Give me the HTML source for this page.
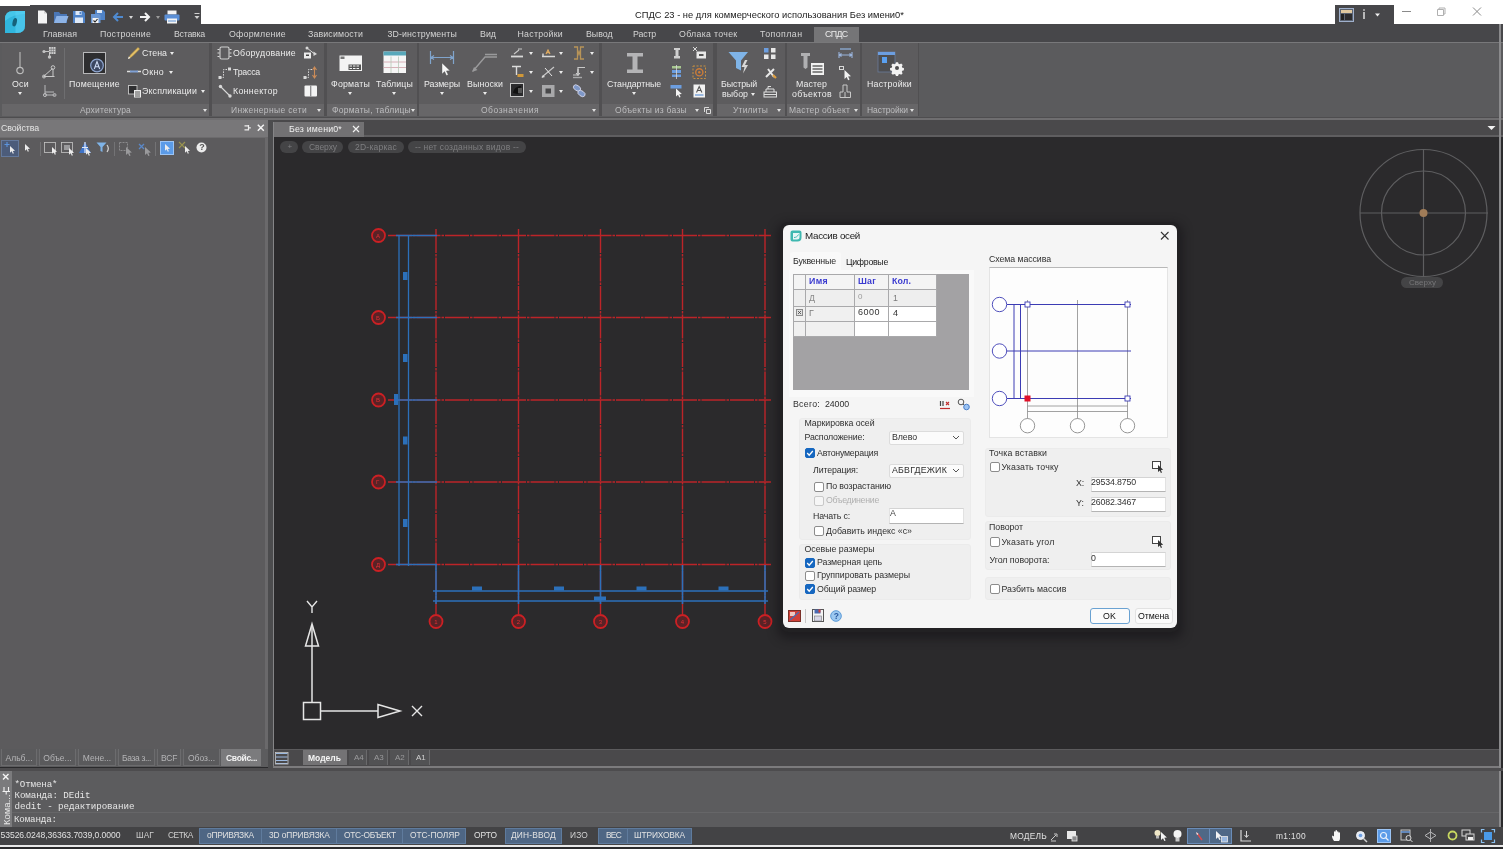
<!DOCTYPE html>
<html lang="ru">
<head>
<meta charset="utf-8">
<title>СПДС 23</title>
<style>
*{box-sizing:border-box;margin:0;padding:0}
html,body{width:1503px;height:849px;overflow:hidden;background:#2a2a2c}
body{position:relative;font-family:"Liberation Sans",sans-serif;font-size:8.5px;color:#d8d8d8}
#root{position:absolute;left:0;top:0;width:1503px;height:849px;will-change:transform}
.a{position:absolute}
.t{position:absolute;white-space:nowrap;line-height:1;transform-origin:0 50%}
svg{position:absolute;overflow:visible}
#titlebar{left:0;top:0;width:1503px;height:25px;background:#fff}
#qat{left:0;top:6px;width:201px;height:19px;background:#47474a}
#qat2{left:30px;top:5px;width:171px;height:3px;background:#47474a}
#wtab{left:1335px;top:5px;width:59px;height:20px;background:#47474a}
#tabrow{left:0;top:24px;width:1503px;height:18px;background:#47474a}
#spds{left:814px;top:27px;width:45px;height:15px;background:#757577}
#ribbon{left:0;top:42px;width:1503px;height:75px;background:#5b5b5d;border-top:1px solid #78787a}
.panel{position:absolute;top:43px;height:73px;background:#5d5c5e}
.plabel{position:absolute;left:0;right:0;bottom:0;height:12px;background:#676668}
.dd{position:absolute;width:0;height:0;border-left:2.5px solid transparent;border-right:2.5px solid transparent;border-top:3px solid #ececec}
#underribbon{left:0;top:117px;width:1503px;height:20px;background:#4a494b;border-top:1px solid #4e4d4f;border-bottom:2px solid #5f5e60}
#underline2{left:0;top:118px;width:1503px;height:2px;background:#6f6e70}
/* left palette */
#prophead{left:0;top:119px;width:268px;height:18px;background:#787779}
#propbody{left:0;top:137px;width:268px;height:612px;background:#5c5b5d;border-right:3px solid #6a696b;border-top:1px solid #6c6b6d}
#splitter{left:268px;top:120px;width:6px;height:646px;background:#4c4c4e}
#doctab{left:274px;top:122px;width:90px;height:15px;background:#727173}
#canvas{left:274px;top:137px;width:1225px;height:612px;background:#2b2a2c}
#canvasL{left:272.500px;top:122px;width:1.500px;height:645px;background:#858587}
#rightedge{left:1499px;top:24px;width:2px;height:821px;background:#8a8a8c}
#proptabs{left:0;top:749px;width:268px;height:18px;background:#5c5c5e}
.ptab{position:absolute;top:749px;height:17px;border:1px solid #6c6c6e;border-top:none;background:#5a5a5c}
#modeltabs{left:274px;top:749px;width:1225px;height:18px;background:#4a494b;border-top:1px solid #5c5b5d}
.mtab{position:absolute;top:750px;height:14.500px;background:#525254;border-right:1px solid #6a6a6c}
#cmdgap{left:0;top:767px;width:1503px;height:4px;background:#4d4c4e}
#cmd{left:0;top:770px;width:1499px;height:57px;background:#5c5c5e}
#cmdside{left:0;top:770px;width:12px;height:57px;background:#7b7b7d}
#cmdline{left:12px;top:812px;width:1487px;height:1px;background:#666668}
.mono{font-family:"Liberation Mono",monospace;font-size:9.2px;color:#e4e4e4}
#status{left:0;top:826.500px;width:1503px;height:18px;background:#434345}
.sb{position:absolute;top:827.500px;height:16px;background:#4e6684;border:1px solid #5f7b9d}
.st{position:absolute;white-space:nowrap;line-height:1;top:831px;font-size:8.5px;color:#dedede;transform-origin:0 50%}
#whiteline{left:0;top:844px;width:1503px;height:2px;background:#e8e8e8}
#bottomdark{left:0;top:846px;width:1503px;height:3px;background:#2a2a2c}
/* dialog */
#dlgshadow{left:781px;top:224px;width:398px;height:408px;border-radius:8px;background:#222123;box-shadow:0 4px 10px 3px rgba(20,19,21,.55)}
#dlg{left:783px;top:225px;width:394px;height:403px;border-radius:6px;background:#f5f5f5;color:#1a1a1a;font-size:8.6px}
#dlg .t{color:#1e1e1e}
.inp{position:absolute;background:#fff;border-top:1px solid #d4d4d4;border-bottom:1px solid #b4b4b4;border-left:1px solid #e2e2e2;border-right:1px solid #e2e2e2}
.cmb{position:absolute;background:#fbfbfb;border:1px solid #dcdcdc;border-radius:2px}
.cb{position:absolute;width:10px;height:10px;border:1px solid #8c8c8c;border-radius:2px;background:#fff}
.cb.on{background:#1667c0;border-color:#1667c0}
.cb.dis{border-color:#c8c8c8;background:#f6f6f6}
.grp{position:absolute;background:#efefef;border:1px solid #ebebeb;border-radius:3px}
</style>
</head>
<body>
<div id="root">
<div class="a" id="titlebar" style="left:-8px;top:-8px;width:1519px;height:33px;"></div>
<div class="a" id="qat" style="left:-8px;top:5.5px;width:209px;height:19.5px;"></div>
<div class="a" id="qat2" style="left:30px;top:5px;width:171px;height:3px;"></div>
<div class="t" style="left:635.0px;top:10.7px;font-size:9.3px;color:#1a1a1a;letter-spacing:0.028px;">СПДС 23 - не для коммерческого использования Без имени0*</div>
<div class="a" id="wtab" style="left:1335px;top:5px;width:59px;height:20px;"></div>
<svg style="left:1400px;top:6px" width="100" height="14" viewBox="0 0 100 14"><path d="M2 5.5h9" stroke="#8a8a8a" stroke-width="1" fill="none"/><path d="M37.5 3.5h6v6h-6z M39 3.5v-1.5h6v6h-1.5" stroke="#b0b0b0" stroke-width="1" fill="none"/><path d="M73 1.5l8 8M81 1.5l-8 8" stroke="#8a8a8a" stroke-width="1" fill="none"/></svg>
<svg style="left:1339px;top:8px" width="50" height="14" viewBox="0 0 50 14"><rect x="0.5" y="0.5" width="14" height="13" fill="#5a6270" stroke="#9fb0cc" stroke-width="1"/><rect x="2" y="2" width="11" height="3" fill="#e0c9a0"/><rect x="2" y="6" width="3" height="6" fill="#222"/><rect x="6" y="6" width="7" height="6" fill="#2c2c2e"/><path d="M25 4v7M25 1.2v1.6" stroke="#e8e8e8" stroke-width="1.4"/><path d="M36 5.5h5l-2.5 3z" fill="#f0f0f0"/></svg>
<div class="a" id="tabrow" style="left:-8px;top:24px;width:1519px;height:18px;"></div>
<div class="a" id="spds" style="left:814px;top:27px;width:45px;height:15px;"></div>
<svg style="left:4.5px;top:11px" width="20" height="22" viewBox="0 0 20 22"><path d="M0 8Q0 0 8 0H20V14Q20 22 12 22H0Z" fill="#30b6de"/><path d="M10.500 0H20V14Q20 22 12 22H10.500Z" fill="#48c4ea"/><path d="M0 8Q0 0 8 0H20V3Q8 3 0 10Z" fill="#58d4f4" opacity=".55"/><ellipse cx="9.700" cy="11.200" rx="2.100" ry="4.300" transform="rotate(14 9.700 11.200)" fill="#15607a"/></svg>
<svg style="left:37px;top:10px" width="12" height="14" viewBox="0 0 12 14"><path d="M1 0.500h6l3 3v10H1z" fill="#f4f4f4"/><path d="M7 .5v3h3" fill="#cfcfcf"/></svg>
<svg style="left:53px;top:10px" width="16" height="14" viewBox="0 0 16 14"><path d="M1 2h5l1.500 2H14v9H1z" fill="#4a76b5"/><path d="M1 13l2.500-7H15.500l-2.500 7z" fill="#8db3e6"/></svg>
<svg style="left:72px;top:10px" width="14" height="14" viewBox="0 0 14 14"><path d="M1 1h10l2 2v10H1z" fill="#4f83c8"/><rect x="3.500" y="1" width="6" height="4" fill="#dfe9f7"/><rect x="3" y="7.500" width="8" height="5.500" fill="#dfe9f7"/><rect x="7.500" y="1.800" width="1.500" height="2.500" fill="#4f83c8"/></svg>
<svg style="left:90px;top:9px" width="16" height="15" viewBox="0 0 16 15"><path d="M5 1h8l2 2v8H5z" fill="#4f83c8"/><rect x="7" y="1" width="5" height="3" fill="#dfe9f7"/><path d="M1 5h8l1.500 1.500V14H1z" fill="#6a97d4"/><rect x="2.500" y="9" width="6" height="5" fill="#f4f4f4"/><path d="M3.500 11.500l1.500 1.500 2.500-3" stroke="#222" stroke-width="1.100" fill="none"/></svg>
<svg style="left:112px;top:12px" width="12" height="10" viewBox="0 0 12 10"><path d="M11 5H2.500M6 1L2 5l4 4" stroke="#4f8ad0" stroke-width="2" fill="none"/></svg>
<div class="dd" style="left:128.5px;top:16.0px;border-top-color:#d8d8d8;"></div>
<svg style="left:139px;top:12px" width="12" height="10" viewBox="0 0 12 10"><path d="M1 5h8.500M6 1l4 4-4 4" stroke="#f4f4f4" stroke-width="2" fill="none"/></svg>
<div class="dd" style="left:155.5px;top:16.0px;border-top-color:#9a9a9a;"></div>
<svg style="left:164px;top:10px" width="16" height="14" viewBox="0 0 16 14"><rect x="3.500" y="0.500" width="9" height="4" fill="#f4f4f4"/><rect x="0.500" y="4.500" width="15" height="6" rx="1" fill="#5b8fd6"/><rect x="3" y="8.500" width="10" height="5" fill="#f4f4f4"/><rect x="4" y="10.500" width="8" height="1" fill="#5b8fd6"/></svg>
<svg style="left:194px;top:13px" width="6" height="8" viewBox="0 0 6 8"><path d="M0.500 0.500h5" stroke="#d0d0d0" stroke-width="1"/><path d="M0.500 3h5l-2.500 3z" fill="#d0d0d0"/></svg>
<div class="t" style="left:43.0px;top:29.6px;font-size:8.8px;color:#d4d4d4;letter-spacing:0.072px;">Главная</div>
<div class="t" style="left:100.0px;top:29.6px;font-size:8.8px;color:#d4d4d4;letter-spacing:0.200px;">Построение</div>
<div class="t" style="left:174.0px;top:29.6px;font-size:8.8px;color:#d4d4d4;letter-spacing:-0.244px;">Вставка</div>
<div class="t" style="left:229.0px;top:29.6px;font-size:8.8px;color:#d4d4d4;letter-spacing:0.238px;">Оформление</div>
<div class="t" style="left:308.0px;top:29.6px;font-size:8.8px;color:#d4d4d4;letter-spacing:0.145px;">Зависимости</div>
<div class="t" style="left:387.5px;top:29.6px;font-size:8.8px;color:#d4d4d4;letter-spacing:0.133px;">3D-инструменты</div>
<div class="t" style="left:480.0px;top:29.6px;font-size:8.8px;color:#d4d4d4;letter-spacing:0.027px;">Вид</div>
<div class="t" style="left:517.5px;top:29.6px;font-size:8.8px;color:#d4d4d4;letter-spacing:0.261px;">Настройки</div>
<div class="t" style="left:586.0px;top:29.6px;font-size:8.8px;color:#d4d4d4;letter-spacing:-0.021px;">Вывод</div>
<div class="t" style="left:633.0px;top:29.6px;font-size:8.8px;color:#d4d4d4;letter-spacing:-0.159px;">Растр</div>
<div class="t" style="left:679.0px;top:29.6px;font-size:8.8px;color:#d4d4d4;letter-spacing:0.303px;">Облака точек</div>
<div class="t" style="left:760.0px;top:29.6px;font-size:8.8px;color:#d4d4d4;letter-spacing:0.451px;">Топоплан</div>
<div class="t" style="left:825.0px;top:29.6px;font-size:8.8px;color:#ececec;letter-spacing:-0.624px;">СПДС</div>
<div class="a" id="ribbon" style="left:-8px;top:42px;width:1519px;height:75px;"></div>
<div class="panel" style="left:2px;width:207px"><div class="plabel"></div></div>
<div class="panel" style="left:212px;width:112px"><div class="plabel"></div></div>
<div class="panel" style="left:327px;width:90px"><div class="plabel"></div></div>
<div class="panel" style="left:419px;width:180px"><div class="plabel"></div></div>
<div class="panel" style="left:602px;width:111px"><div class="plabel"></div></div>
<div class="panel" style="left:717px;width:68px"><div class="plabel"></div></div>
<div class="panel" style="left:787px;width:73px"><div class="plabel"></div></div>
<div class="panel" style="left:862px;width:56px"><div class="plabel"></div></div>
<div class="a" style="left:209px;top:43px;width:3px;height:73px;background:#515052;"></div>
<div class="a" style="left:324px;top:43px;width:3px;height:73px;background:#515052;"></div>
<div class="a" style="left:417px;top:43px;width:2px;height:73px;background:#515052;"></div>
<div class="a" style="left:599px;top:43px;width:3px;height:73px;background:#515052;"></div>
<div class="a" style="left:713px;top:43px;width:4px;height:73px;background:#515052;"></div>
<div class="a" style="left:785px;top:43px;width:2px;height:73px;background:#515052;"></div>
<div class="a" style="left:860px;top:43px;width:2px;height:73px;background:#515052;"></div>
<div class="a" style="left:918px;top:43px;width:1px;height:73px;background:#515052;"></div>
<div class="t" style="left:80.0px;top:105.8px;font-size:8.5px;color:#bdbdbf;letter-spacing:0.160px;">Архитектура</div>
<div class="dd" style="left:202.5px;top:109.0px;border-top-color:#e0e0e0;"></div>
<div class="t" style="left:231.0px;top:105.8px;font-size:8.5px;color:#bdbdbf;letter-spacing:0.360px;">Инженерные сети</div>
<div class="dd" style="left:316.5px;top:109.0px;border-top-color:#e0e0e0;"></div>
<div class="t" style="left:332.0px;top:105.8px;font-size:8.5px;color:#bdbdbf;letter-spacing:0.267px;">Форматы, таблицы</div>
<div class="dd" style="left:411.0px;top:109.0px;border-top-color:#e0e0e0;"></div>
<div class="t" style="left:481.0px;top:105.8px;font-size:8.5px;color:#bdbdbf;letter-spacing:0.505px;">Обозначения</div>
<div class="dd" style="left:591.5px;top:109.0px;border-top-color:#e0e0e0;"></div>
<div class="t" style="left:615.0px;top:105.8px;font-size:8.5px;color:#bdbdbf;letter-spacing:0.284px;">Объекты из базы</div>
<div class="dd" style="left:694.5px;top:109.0px;border-top-color:#e0e0e0;"></div>
<svg style="left:704px;top:107px" width="7" height="7" viewBox="0 0 7 7"><path d="M0.500 5V0.500H5M2.500 2.500h4v4h-4z" stroke="#d8d8d8" fill="none" stroke-width="1"/></svg>
<div class="t" style="left:733.0px;top:105.8px;font-size:8.5px;color:#bdbdbf;letter-spacing:0.178px;">Утилиты</div>
<div class="dd" style="left:776.5px;top:109.0px;border-top-color:#e0e0e0;"></div>
<div class="t" style="left:789.0px;top:105.8px;font-size:8.5px;color:#bdbdbf;letter-spacing:0.167px;">Мастер объект</div>
<div class="dd" style="left:853.5px;top:109.0px;border-top-color:#e0e0e0;"></div>
<div class="t" style="left:867.0px;top:105.8px;font-size:8.5px;color:#bdbdbf;letter-spacing:-0.075px;">Настройки</div>
<div class="dd" style="left:910.0px;top:109.0px;border-top-color:#e0e0e0;"></div>
<svg style="left:14px;top:51px" width="12" height="25" viewBox="0 0 12 25"><path d="M6 1v15" stroke="#bcbcbc" stroke-width="1.100"/><circle cx="6" cy="19.500" r="3.200" stroke="#bcbcbc" stroke-width="1.200" fill="none"/></svg>
<div class="t" style="left:12.0px;top:79.6px;font-size:8.8px;color:#ececec;letter-spacing:0.280px;">Оси</div>
<div class="dd" style="left:17.5px;top:92.0px;"></div>
<svg style="left:42px;top:46px" width="14" height="13" viewBox="0 0 14 13"><rect x="7" y="1" width="6.500" height="7" fill="#d0d0d0"/><path d="M7 3.300h6.500M7 5.600h6.500M9.200 1v7M11.400 1v7" stroke="#6a6a6c" stroke-width=".600"/><path d="M2 5.500h5M7.500 8v3" stroke="#c4c4c4" fill="none" stroke-width="1"/><circle cx="2" cy="5.500" r="1.600" fill="#c4c4c4"/><circle cx="7.500" cy="11" r="1.700" fill="#c4c4c4"/></svg>
<svg style="left:42px;top:65px" width="14" height="13" viewBox="0 0 14 13"><path d="M1.500 11.500h11M1.500 11.500l9-8M11 4v7" stroke="#c8c8c8" fill="none" stroke-width="1"/><circle cx="11" cy="2.500" r="1.800" fill="none" stroke="#c8c8c8"/><circle cx="2" cy="11.500" r="1.500" fill="none" stroke="#c8c8c8"/></svg>
<svg style="left:42px;top:84px" width="14" height="13" viewBox="0 0 14 13"><path d="M3 1v10h10M3 8h9" stroke="#b8b8ba" fill="none" stroke-width="1"/><circle cx="3" cy="11" r="1.600" fill="none" stroke="#b8b8ba"/><circle cx="12.500" cy="11" r="1.500" fill="none" stroke="#b8b8ba"/></svg>
<div class="a" style="left:64px;top:48px;width:1px;height:51px;background:#6e6e70;"></div>
<svg style="left:83px;top:51px" width="24" height="24" viewBox="0 0 24 24"><rect x="1" y="2" width="21" height="20" fill="#2e2e30"/><path d="M0.500 1.500h22v21H0.500zM0.500 8V1.500H7M16 1.500h6.500V8M0.500 16v6.500H7" stroke="#b8b8ba" fill="none" stroke-width="1"/><circle cx="14" cy="14.500" r="6.300" fill="#3b4660" stroke="#8fa6d0" stroke-width="1.200"/><path d="M11.300 18L14 10.500l2.700 7.500M12.200 15.700h3.600" stroke="#cfdcf4" stroke-width="1.100" fill="none"/></svg>
<div class="t" style="left:69.0px;top:79.6px;font-size:8.8px;color:#ececec;letter-spacing:0.237px;">Помещение</div>
<svg style="left:127px;top:46px" width="14" height="14" viewBox="0 0 14 14"><path d="M1.500 12.500l2-3.500L11 1.500 12.500 3 5 10.500z" fill="#e6c36a" stroke="#c8a040" stroke-width=".600"/><path d="M1 13l.800-2.600L3.600 12z" fill="#f2f2f2"/></svg>
<div class="t" style="left:142.0px;top:48.6px;font-size:8.8px;color:#ececec;letter-spacing:0.013px;">Стена</div>
<div class="dd" style="left:169.5px;top:52.0px;"></div>
<svg style="left:127px;top:68px" width="14" height="8" viewBox="0 0 14 8"><path d="M0 3.500h3.500M10.500 3.500h3.500" stroke="#e0e0e0" stroke-width="1.300"/><rect x="3" y="2.500" width="8" height="2" fill="#7fa0d4"/></svg>
<div class="t" style="left:142.0px;top:67.6px;font-size:8.8px;color:#ececec;letter-spacing:0.388px;">Окно</div>
<div class="dd" style="left:168.5px;top:71.0px;"></div>
<svg style="left:128px;top:85px" width="14" height="13" viewBox="0 0 14 13"><rect x="0.500" y="0.500" width="8.500" height="8.500" fill="#2e2e30" stroke="#c8c8c8" stroke-width=".900"/><rect x="6" y="5" width="7" height="7.500" fill="#ececec"/><path d="M7 7h5M7 9h5M7 11h5" stroke="#444" stroke-width=".900"/></svg>
<div class="t" style="left:142.0px;top:86.6px;font-size:8.8px;color:#ececec;letter-spacing:0.155px;">Экспликации</div>
<div class="dd" style="left:200.5px;top:90.0px;"></div>
<svg style="left:217px;top:46px" width="15" height="14" viewBox="0 0 15 14"><rect x="3" y="1" width="9" height="12" rx="1.500" fill="none" stroke="#d0d0d0" stroke-width="1.100"/><path d="M0.500 3.500h2M0.500 7h2M0.500 10.500h2M12.500 3.500h2M12.500 7h2M12.500 10.500h2" stroke="#d8d8d8"/></svg>
<div class="t" style="left:233.0px;top:48.6px;font-size:8.8px;color:#ececec;letter-spacing:0.262px;">Оборудование</div>
<svg style="left:218px;top:66px" width="14" height="13" viewBox="0 0 14 13"><path d="M2 11.500h3.500v-8H11" stroke="#d8d8d8" fill="none" stroke-dasharray="1.500 1.200"/><rect x="0.500" y="10" width="3" height="3" fill="#d8d8d8"/><rect x="10" y="1.500" width="3" height="3" fill="#d8d8d8"/></svg>
<div class="t" style="left:233.0px;top:67.6px;font-size:8.8px;color:#ececec;letter-spacing:-0.227px;">Трасса</div>
<svg style="left:218px;top:84px" width="14" height="14" viewBox="0 0 14 14"><path d="M2.500 2.500l9.500 9.500" stroke="#d8d8d8" stroke-width="1.100"/><circle cx="2.500" cy="2.500" r="1.700" fill="#d8d8d8"/><circle cx="12" cy="12" r="1.700" fill="#d8d8d8"/></svg>
<div class="t" style="left:233.0px;top:86.6px;font-size:8.8px;color:#ececec;letter-spacing:0.300px;">Коннектор</div>
<svg style="left:303px;top:46px" width="15" height="13" viewBox="0 0 15 13"><path d="M4 2l7 5.500" stroke="#d8d8d8"/><circle cx="4" cy="2" r="1.500" fill="#d8d8d8"/><path d="M10.500 5.500l3.500 2.500-3.500 2z" fill="#d8d8d8"/><rect x="1" y="6.500" width="7" height="6" fill="#ececec"/><rect x="3" y="8.500" width="3" height="1.500" fill="#444"/></svg>
<svg style="left:303px;top:66px" width="15" height="13" viewBox="0 0 15 13"><path d="M2 11.500h3.500v-8H9" stroke="#d8d8d8" fill="none" stroke-dasharray="1.500 1.200"/><rect x="0.500" y="10" width="3" height="3" fill="#d8d8d8"/><path d="M11.500 1v11M9.500 4l2-3 2 3M9.500 9l2 3 2-3" stroke="#cc8c58" fill="none" stroke-width="1.100"/></svg>
<svg style="left:304px;top:85px" width="14" height="12" viewBox="0 0 14 12"><rect x="0.500" y="0.500" width="12.500" height="11" rx="1" fill="#f4f4f4"/><path d="M6.700 .5v11" stroke="#8a8a8c" stroke-width="1.300"/></svg>
<svg style="left:339px;top:55px" width="24" height="17" viewBox="0 0 24 17"><rect x="0.500" y="0.500" width="22.500" height="15.500" fill="#f4f4f4"/><rect x="1.500" y="1.500" width="4" height="2.500" fill="#777"/><rect x="9.500" y="9.500" width="12.500" height="5.500" fill="#555"/><path d="M10.500 11h10.500M10.500 13.500h10.500" stroke="#f4f4f4" stroke-width="1.200" stroke-dasharray="2.500 1"/></svg>
<div class="t" style="left:331.0px;top:79.6px;font-size:8.8px;color:#ececec;letter-spacing:0.202px;">Форматы</div>
<div class="dd" style="left:347.5px;top:92.0px;"></div>
<svg style="left:383px;top:51px" width="24" height="23" viewBox="0 0 24 23"><rect x="0.500" y="0.500" width="22.500" height="21.500" fill="#f6f6f6"/><rect x="0.500" y="0.500" width="22.500" height="4" fill="#58a8ba"/><path d="M0.500 11h22.500M0.500 16.500h22.500" stroke="#d0a0a8" stroke-width=".800"/><path d="M8 5.500v16.500M15.500 5.500v16.500" stroke="#b8c8b8" stroke-width=".800"/></svg>
<div class="t" style="left:376.0px;top:79.6px;font-size:8.8px;color:#ececec;letter-spacing:0.152px;">Таблицы</div>
<div class="dd" style="left:391.5px;top:92.0px;"></div>
<svg style="left:429px;top:50px" width="26" height="28" viewBox="0 0 26 28"><path d="M1.500 1v13M24.500 1v13M1.500 7.500h23M5 5.500l-3 2 3 2M21 5.500l3 2-3 2" stroke="#80a4cc" stroke-width="1.200" fill="none"/><path d="M13 13l0 11 2.600-2.400 1.800 4 1.800-.800-1.800-3.900 3.600-.200z" fill="#f6f6f6" stroke="#555" stroke-width=".400"/></svg>
<div class="t" style="left:424.0px;top:79.6px;font-size:8.8px;color:#ececec;letter-spacing:-0.082px;">Размеры</div>
<div class="dd" style="left:439.5px;top:92.0px;"></div>
<svg style="left:471px;top:53px" width="27" height="20" viewBox="0 0 27 20"><path d="M2 18L14 4h12M14 1.500h12" stroke="#9a9a9c" stroke-width="1.400" fill="none"/><path d="M1 19l5.500-2-3.500-3z" fill="#9a9a9c"/></svg>
<div class="t" style="left:467.0px;top:79.6px;font-size:8.8px;color:#ececec;letter-spacing:0.127px;">Выноски</div>
<div class="dd" style="left:482.5px;top:92.0px;"></div>
<svg style="left:510px;top:47px" width="15" height="12" viewBox="0 0 15 12"><path d="M1 9.500h12" stroke="#d8d8d8" stroke-width="1.800"/><path d="M4 7l5-4M8 2h4" stroke="#c8c8c8" stroke-width="1.100" fill="none"/></svg>
<div class="dd" style="left:528.5px;top:52.0px;"></div>
<svg style="left:510px;top:64px" width="15" height="15" viewBox="0 0 15 15"><path d="M2 2.500h9M6.500 2.500v8.500" stroke="#dcdcdc" stroke-width="1.400"/><rect x="7.500" y="10" width="6" height="3" fill="#d09838"/></svg>
<div class="dd" style="left:528.5px;top:71.0px;"></div>
<svg style="left:510px;top:83px" width="15" height="15" viewBox="0 0 15 15"><rect x="0.500" y="0.500" width="13" height="13" fill="#2a2a2c" stroke="#c8c8c8"/><path d="M3 10c1-5 4-7 8-7-1 3-1 5-3 8z" fill="#111"/><rect x="8" y="5" width="4" height="5" fill="#555"/></svg>
<div class="dd" style="left:528.5px;top:90.0px;"></div>
<svg style="left:541px;top:47px" width="15" height="12" viewBox="0 0 15 12"><path d="M1 9.500h13M2 9.500v-3" stroke="#d8d8d8" stroke-width="1.400"/><path d="M5 7l2-4 2 4M5.800 5.800h2.400" stroke="#e8b060" stroke-width="1.100" fill="none"/></svg>
<div class="dd" style="left:558.5px;top:52.0px;"></div>
<svg style="left:541px;top:65px" width="15" height="14" viewBox="0 0 15 14"><path d="M1 12L13 2" stroke="#c8c8c8" stroke-width="1.200"/><path d="M4 3l7 8" stroke="#e8e8e8" stroke-width="1"/><path d="M0.500 13l3.500-1-2-2z" fill="#d8d8d8"/></svg>
<div class="dd" style="left:558.5px;top:71.0px;"></div>
<svg style="left:541px;top:84px" width="15" height="14" viewBox="0 0 15 14"><rect x="1" y="1" width="12.500" height="12" fill="#a8a8aa"/><rect x="4.500" y="4.500" width="5.500" height="5" fill="#48484a"/></svg>
<div class="dd" style="left:558.5px;top:90.0px;"></div>
<svg style="left:572px;top:46px" width="14" height="14" viewBox="0 0 14 14"><path d="M2 1h3.500v12H2M12 1H8.500v12H12" stroke="#b89458" stroke-width="1.300" fill="none"/><path d="M5.500 4c1.500 1 1.500 5 0 6M8.500 4c-1.500 1-1.500 5 0 6" stroke="#b89458" fill="none"/></svg>
<div class="dd" style="left:589.5px;top:52.0px;"></div>
<svg style="left:572px;top:65px" width="14" height="14" viewBox="0 0 14 14"><path d="M1 10h5V2.500h7" stroke="#c8c8c8" stroke-width="1.200" fill="none"/><path d="M6 4v5M4 8l2 2.500 2-2.500" stroke="#d8d8d8" fill="none"/><path d="M1 12.500h9" stroke="#a8a8aa" stroke-width="1.400"/></svg>
<div class="dd" style="left:589.5px;top:71.0px;"></div>
<svg style="left:572px;top:84px" width="15" height="14" viewBox="0 0 15 14"><ellipse cx="5" cy="4" rx="4" ry="2.600" transform="rotate(35 5 4)" fill="#7f98c8" stroke="#d8d8e8" stroke-width=".800"/><ellipse cx="9.500" cy="9.500" rx="4" ry="2.600" transform="rotate(35 9.500 9.500)" fill="#7f98c8" stroke="#d8d8e8" stroke-width=".800"/></svg>
<svg style="left:626px;top:52px" width="18" height="22" viewBox="0 0 18 22"><path d="M1 1h16v3.500h-5.500v13H17V21H1v-3.500h5.500v-13H1z" fill="#b4b4b6"/></svg>
<div class="t" style="left:607.0px;top:79.6px;font-size:8.8px;color:#ececec;letter-spacing:-0.080px;">Стандартные</div>
<div class="dd" style="left:631.5px;top:92.0px;"></div>
<svg style="left:671px;top:47px" width="12" height="13" viewBox="0 0 12 13"><path d="M3 1h6v2H7.500v6H9v2.500H3V9h1.500V3H3z" fill="#d0d0d0"/></svg>
<svg style="left:671px;top:65px" width="12" height="14" viewBox="0 0 12 14"><rect x="1" y="1" width="9" height="2.500" fill="#a8c890"/><rect x="1" y="5" width="9" height="3" fill="#6c9ee0"/><rect x="1" y="9.500" width="9" height="2.500" fill="#6c9ee0"/><path d="M5.500 0v14" stroke="#d8d8d8" stroke-width=".800"/></svg>
<svg style="left:670px;top:84px" width="14" height="14" viewBox="0 0 14 14"><rect x="0.500" y="1" width="11" height="3.500" fill="#6c9ee0"/><path d="M6 4.500l0 8 2-1.800 1.300 2.900 1.300-.600-1.300-2.800 2.600-.200z" fill="#f4f4f4"/></svg>
<svg style="left:692px;top:46px" width="15" height="14" viewBox="0 0 15 14"><path d="M1 1l4 4M5 1L1 5" stroke="#d8d8d8"/><rect x="4.500" y="5.500" width="9.500" height="7" fill="#e8e8e8"/><rect x="7" y="8" width="4.500" height="2" fill="#555"/></svg>
<svg style="left:692px;top:65px" width="15" height="15" viewBox="0 0 15 15"><rect x="1" y="1" width="12.500" height="12.500" fill="none" stroke="#c89040" stroke-dasharray="2 1.500"/><circle cx="7.300" cy="7.300" r="3.600" fill="none" stroke="#cc7c38" stroke-width="1.400"/><circle cx="7.300" cy="7.300" r="1.200" fill="#cc7c38"/></svg>
<svg style="left:693px;top:84px" width="13" height="15" viewBox="0 0 13 15"><rect x="0.500" y="0.500" width="11.500" height="13" fill="#f2f2f2"/><path d="M3.500 8.500L6.200 2.500l2.700 6M4.500 6.500h3.400" stroke="#555" stroke-width="1.100" fill="none"/><rect x="2" y="10" width="8.500" height="2" fill="#9ab8e0"/></svg>
<svg style="left:728px;top:51px" width="24" height="24" viewBox="0 0 24 24"><path d="M0.500 1h19.500l-7 8.500v10l-5 -2.500v-7.500z" fill="#7fb4e8"/><path d="M17 9l-3.500 7h3l-1.500 6.500 5-8.500h-3l2.500-5z" fill="#d8d8d8"/></svg>
<div class="t" style="left:721.0px;top:79.6px;font-size:8.8px;color:#ececec;letter-spacing:-0.095px;">Быстрый</div>
<div class="t" style="left:722.0px;top:89.6px;font-size:8.8px;color:#ececec;letter-spacing:0.034px;">выбор</div>
<div class="dd" style="left:751.0px;top:93.0px;"></div>
<svg style="left:763px;top:47px" width="14" height="13" viewBox="0 0 14 13"><rect x="1" y="1" width="4.500" height="4.500" fill="#6c9ee0"/><rect x="8" y="1" width="4.500" height="4.500" fill="#e8e8e8"/><rect x="1" y="7.500" width="4.500" height="4.500" fill="#e8e8e8"/><rect x="8" y="7.500" width="4.500" height="4.500" fill="#e8e8e8"/></svg>
<svg style="left:764px;top:66px" width="14" height="14" viewBox="0 0 14 14"><path d="M2 11l8-8M4 3l6 8" stroke="#e8e8e8" stroke-width="2"/><path d="M9 9l3 3" stroke="#e0a040" stroke-width="2.200"/></svg>
<svg style="left:763px;top:84px" width="15" height="14" viewBox="0 0 15 14"><rect x="1" y="8" width="12.500" height="5" fill="none" stroke="#e0e0e0"/><path d="M1 10.500h12.500M3 8V5h8v3M5 5V2.500h3" stroke="#e0e0e0" fill="none"/></svg>
<svg style="left:800px;top:52px" width="25" height="24" viewBox="0 0 25 24"><path d="M1 1h9v3H7.500v11.500L5.500 17l-2-1.500V4H1z" fill="#b0b0b2"/><rect x="11" y="11" width="13" height="12" fill="#f2f2f2"/><path d="M12.500 14h10M12.500 17h10M12.500 20h10" stroke="#666" stroke-width="1.300"/></svg>
<div class="t" style="left:796.0px;top:79.6px;font-size:8.8px;color:#ececec;letter-spacing:0.093px;">Мастер</div>
<div class="t" style="left:792.0px;top:89.6px;font-size:8.8px;color:#ececec;letter-spacing:0.314px;">объектов</div>
<svg style="left:838px;top:47px" width="15" height="12" viewBox="0 0 15 12"><path d="M2 2h11" stroke="#8aa8d0" stroke-width="1.400"/><path d="M1 8h13M1 5v6M14 5v6M3.500 6.500L1.500 8l2 1.500M11.500 6.500l2 1.500-2 1.500" stroke="#9ab4dc" stroke-width="1.100" fill="none"/></svg>
<svg style="left:839px;top:66px" width="15" height="15" viewBox="0 0 15 15"><rect x="0.500" y="0.500" width="4" height="3" fill="none" stroke="#d8d8d8"/><path d="M5.500 4l0 9 2.200-2 1.400 3.200 1.500-.700-1.500-3.100 2.900-.200z" fill="#f2f2f2"/></svg>
<svg style="left:839px;top:84px" width="13" height="15" viewBox="0 0 13 15"><path d="M4 1h4v7h3.500v5.500H1V8h3zM6 8v5.500" stroke="#c8c8c8" fill="none" stroke-width="1"/></svg>
<svg style="left:877px;top:51px" width="28" height="26" viewBox="0 0 28 26"><rect x="1" y="1" width="17" height="20" fill="#4e4e50" stroke="#6a7a98" stroke-width=".800"/><rect x="1" y="1" width="17" height="3" fill="#6c9ee0"/><rect x="5" y="6" width="5" height="6" fill="#5aa0f0"/><g transform="translate(20 17) scale(0.72)"><path d="M-1.500-8h3l.6 2.200 1.700.7 2-1.200 2.100 2.100-1.200 2 .7 1.700 2.200.6v3l-2.200.6-.7 1.700 1.200 2-2.100 2.100-2-1.200-1.700.7-.6 2.200h-3l-.6-2.200-1.700-.7-2 1.200-2.100-2.100 1.200-2-.7-1.700-2.200-.6v-3l2.200-.6.7-1.700-1.200-2 2.100-2.100 2 1.200 1.700-.7z" fill="#f2f2f2"/><circle r="2.800" fill="#4e4e50"/></g></svg>
<div class="t" style="left:867.0px;top:79.6px;font-size:8.8px;color:#ececec;letter-spacing:0.206px;">Настройки</div>
<div class="a" id="underribbon" style="left:-8px;top:117px;width:1519px;height:20px;"></div>
<div class="a" id="underline2" style="left:-8px;top:118px;width:1519px;height:2px;"></div>
<svg style="left:1487px;top:125px" width="10" height="6" viewBox="0 0 10 6"><path d="M0.500 1h8l-4 4z" fill="#f2f2f2"/></svg>
<div class="a" id="prophead" style="left:-8px;top:119.5px;width:276px;height:17.5px;"></div>
<div class="a" id="propbody" style="left:-8px;top:137px;width:276px;height:612px;"></div>
<div class="a" id="splitter" style="left:268px;top:120px;width:6px;height:648px;"></div>
<div class="t" style="left:1.0px;top:123.6px;font-size:8.8px;color:#e4e4e4;letter-spacing:-0.080px;">Свойства</div>
<svg style="left:243px;top:124px" width="9" height="8" viewBox="0 0 9 8"><path d="M1.500 1.800h4v4h-4M5.500 1v5.600M5.500 3.800h2.300" stroke="#ececec" stroke-width="1.200" fill="none"/></svg>
<svg style="left:257px;top:124px" width="8" height="8" viewBox="0 0 8 8"><path d="M.8 .8l6 6M6.800 .8l-6 6" stroke="#f4f4f4" stroke-width="1.500"/></svg>
<div class="a" style="left:1px;top:140px;width:18px;height:17px;background:#4c5c7a;border:1px solid #64799c"></div>
<svg style="left:4px;top:142px" width="14" height="14" viewBox="0 0 14 14"><path d="M3 0v5M.5 2.500h5" stroke="#5c94dc" stroke-width="1.100"/><g transform="translate(6 4)"><path d="M0 0l0 6.800 1.700-1.500 1.100 2.500 1.100-.500-1.100-2.400 2.200-.200z" fill="#ececec"/></g></svg>
<svg style="left:24px;top:143px" width="10" height="12" viewBox="0 0 10 12"><g transform="translate(1 1)"><path d="M0 0l0 6.800 1.700-1.500 1.100 2.500 1.100-.500-1.100-2.400 2.200-.200z" fill="#ececec"/></g></svg>
<div class="a" style="left:40px;top:142px;width:1px;height:14px;background:#737375;"></div>
<svg style="left:44px;top:142px" width="14" height="14" viewBox="0 0 14 14"><rect x="0.500" y="0.500" width="11" height="10" fill="none" stroke="#c4c4c4" stroke-width=".800"/><g transform="translate(8 5)"><path d="M0 0l0 6.800 1.700-1.500 1.100 2.500 1.100-.500-1.100-2.400 2.200-.200z" fill="#ececec"/></g></svg>
<svg style="left:61px;top:142px" width="14" height="14" viewBox="0 0 14 14"><rect x="0.500" y="0.500" width="11" height="10" fill="none" stroke="#c4c4c4" stroke-width=".800"/><rect x="3" y="3" width="6" height="5" fill="#9a9a9c"/><g transform="translate(8 6)"><path d="M0 0l0 6.800 1.700-1.500 1.100 2.500 1.100-.500-1.100-2.400 2.200-.200z" fill="#ececec"/></g></svg>
<svg style="left:78px;top:142px" width="15" height="14" viewBox="0 0 15 14"><path d="M1 11L7 0l6 11z" fill="#3f74c8"/><path d="M7 0v11M4 5.500h6" stroke="#dfe8f8" stroke-width="1.200"/><g transform="translate(8 6)"><path d="M0 0l0 6.800 1.700-1.500 1.100 2.500 1.100-.500-1.100-2.400 2.200-.200z" fill="#ececec"/></g></svg>
<svg style="left:96px;top:142px" width="14" height="13" viewBox="0 0 14 13"><path d="M0.500 .5h10l-4 4.500v5l-2-1v-4z" fill="#7fb4e8"/><path d="M11 3c1.500 2 1.500 5 0 7" stroke="#d8d8d8" fill="none" stroke-width="1.200"/></svg>
<div class="a" style="left:114px;top:142px;width:1px;height:14px;background:#737375;"></div>
<svg style="left:119px;top:142px" width="14" height="14" viewBox="0 0 14 14"><rect x="0.500" y="0.500" width="8" height="8" fill="none" stroke="#8a8a8c" stroke-dasharray="2 1"/><g transform="translate(7 5)"><path d="M0 0l0 8 2-1.800 1.300 2.900 1.300-.600-1.300-2.800 2.600-.200z" fill="#9a9a9c"/></g></svg>
<svg style="left:138px;top:143px" width="14" height="14" viewBox="0 0 14 14"><path d="M1 1l5 5M6 1L1 6" stroke="#5a88c8" stroke-width="1.300"/><g transform="translate(7 4)"><path d="M0 0l0 8 2-1.800 1.300 2.900 1.300-.600-1.300-2.800 2.600-.200z" fill="#9a9a9c"/></g></svg>
<div class="a" style="left:155px;top:142px;width:1px;height:14px;background:#737375;"></div>
<div class="a" style="left:160px;top:141px;width:14px;height:14px;background:#5b9be8;border:1px solid #9cc4f4"></div>
<svg style="left:164px;top:143px" width="10" height="12" viewBox="0 0 10 12"><g transform="translate(1 1)"><path d="M0 0l0 6.800 1.700-1.500 1.100 2.500 1.100-.500-1.100-2.400 2.200-.200z" fill="#ececec"/></g></svg>
<svg style="left:178px;top:141px" width="14" height="15" viewBox="0 0 14 15"><path d="M1 1l6 6M7 1L1 7" stroke="#9a9450" stroke-width="1.200"/><g transform="translate(7 5)"><path d="M0 0l0 6.800 1.700-1.500 1.100 2.500 1.100-.500-1.100-2.400 2.200-.200z" fill="#ececec"/></g></svg>
<svg style="left:196px;top:142px" width="12" height="12" viewBox="0 0 12 12"><circle cx="5.500" cy="5.500" r="5" fill="#ececec"/></svg>
<div class="t" style="left:199.3px;top:143.0px;font-size:9px;color:#555;font-weight:bold;">?</div>
<div class="a" id="proptabs" style="left:-8px;top:749px;width:276px;height:18px;"></div>
<div class="ptab" style="left:1px;width:36px"></div>
<div class="t" style="left:5.5px;top:753.8px;font-size:8.5px;color:#b4b4b6;letter-spacing:0.000px;">Альб...</div>
<div class="ptab" style="left:39px;width:37px"></div>
<div class="t" style="left:43.3px;top:753.8px;font-size:8.5px;color:#b4b4b6;letter-spacing:0.000px;">Объе...</div>
<div class="ptab" style="left:78px;width:38px"></div>
<div class="t" style="left:82.8px;top:753.8px;font-size:8.5px;color:#b4b4b6;letter-spacing:0.000px;">Мене...</div>
<div class="ptab" style="left:118px;width:37px"></div>
<div class="t" style="left:122.0px;top:753.8px;font-size:8.5px;color:#b4b4b6;letter-spacing:-0.353px;">База з...</div>
<div class="ptab" style="left:157px;width:24px"></div>
<div class="t" style="left:161.0px;top:753.8px;font-size:8.5px;color:#b4b4b6;letter-spacing:-0.333px;">BCF</div>
<div class="ptab" style="left:183px;width:37px"></div>
<div class="t" style="left:188.0px;top:753.8px;font-size:8.5px;color:#b4b4b6;letter-spacing:0.000px;">Обоз...</div>
<div class="a" style="left:221px;top:749px;width:40px;height:17px;background:#7b7b7d;"></div>
<div class="t" style="left:226.0px;top:753.8px;font-size:8.5px;color:#f4f4f4;font-weight:bold;letter-spacing:-0.310px;">Свойс...</div>
<div class="a" id="doctab" style="left:274px;top:122px;width:90px;height:15px;"></div>
<div class="t" style="left:289.0px;top:124.6px;font-size:8.8px;color:#f0f0f0;letter-spacing:0.190px;">Без имени0*</div>
<svg style="left:352px;top:125px" width="8" height="8" viewBox="0 0 8 8"><path d="M1 1l6 6M7 1L1 7" stroke="#f0f0f0" stroke-width="1.200"/></svg>
<div class="a" id="canvas" style="left:274px;top:137px;width:1225px;height:612px;"></div>
<div class="a" style="left:280px;top:141px;width:18px;height:12px;background:#444446;border-radius:6px;"></div>
<div class="a" style="left:302px;top:141px;width:41px;height:12px;background:#444446;border-radius:6px;"></div>
<div class="a" style="left:348px;top:141px;width:56px;height:12px;background:#444446;border-radius:6px;"></div>
<div class="a" style="left:408px;top:141px;width:118px;height:12px;background:#444446;border-radius:6px;"></div>
<div class="t" style="left:287.5px;top:143.0px;font-size:8px;color:#7e7e80;">+</div>
<div class="t" style="left:309.0px;top:142.8px;font-size:8.5px;color:#7e7e80;letter-spacing:-0.070px;">Сверху</div>
<div class="t" style="left:355.0px;top:142.8px;font-size:8.5px;color:#7e7e80;letter-spacing:0.229px;">2D-каркас</div>
<div class="t" style="left:415.0px;top:142.8px;font-size:8.5px;color:#7e7e80;letter-spacing:0.184px;">-- нет созданных видов --</div>
<svg style="left:0;top:0" width="1503" height="849" viewBox="0 0 1503 849"><path d="M388 235.5H771" stroke="#bc2428" stroke-width="1.400" stroke-dasharray="24 1 2.5 1" fill="none"/><circle cx="378.500" cy="235.5" r="6.500" stroke="#cc2024" stroke-width="1.800" fill="#5a2226"/><path d="M388 317.5H771" stroke="#bc2428" stroke-width="1.400" stroke-dasharray="24 1 2.5 1" fill="none"/><circle cx="378.500" cy="317.5" r="6.500" stroke="#cc2024" stroke-width="1.800" fill="#5a2226"/><path d="M388 400H771" stroke="#bc2428" stroke-width="1.400" stroke-dasharray="24 1 2.5 1" fill="none"/><circle cx="378.500" cy="400" r="6.500" stroke="#cc2024" stroke-width="1.800" fill="#5a2226"/><path d="M388 482H771" stroke="#bc2428" stroke-width="1.400" stroke-dasharray="24 1 2.5 1" fill="none"/><circle cx="378.500" cy="482" r="6.500" stroke="#cc2024" stroke-width="1.800" fill="#5a2226"/><path d="M388 564.5H771" stroke="#bc2428" stroke-width="1.400" stroke-dasharray="24 1 2.5 1" fill="none"/><circle cx="378.500" cy="564.5" r="6.500" stroke="#cc2024" stroke-width="1.800" fill="#5a2226"/><path d="M436 229V614" stroke="#bc2428" stroke-width="1.400" stroke-dasharray="24 1 2.5 1" fill="none"/><circle cx="436" cy="621.500" r="6.500" stroke="#cc2024" stroke-width="1.800" fill="#5a2226"/><path d="M518.5 229V614" stroke="#bc2428" stroke-width="1.400" stroke-dasharray="24 1 2.5 1" fill="none"/><circle cx="518.5" cy="621.500" r="6.500" stroke="#cc2024" stroke-width="1.800" fill="#5a2226"/><path d="M600.5 229V614" stroke="#bc2428" stroke-width="1.400" stroke-dasharray="24 1 2.5 1" fill="none"/><circle cx="600.5" cy="621.500" r="6.500" stroke="#cc2024" stroke-width="1.800" fill="#5a2226"/><path d="M682.5 229V614" stroke="#bc2428" stroke-width="1.400" stroke-dasharray="24 1 2.5 1" fill="none"/><circle cx="682.5" cy="621.500" r="6.500" stroke="#cc2024" stroke-width="1.800" fill="#5a2226"/><path d="M765 229V614" stroke="#bc2428" stroke-width="1.400" stroke-dasharray="24 1 2.5 1" fill="none"/><circle cx="765" cy="621.500" r="6.500" stroke="#cc2024" stroke-width="1.800" fill="#5a2226"/><path d="M399 235.500V566M408.500 235.500V566" stroke="#2c70ba" stroke-width="1.300" fill="none"/><path d="M396 235.5H437" stroke="#2c70ba" stroke-width="1.600" fill="none"/><path d="M396 317.5H437" stroke="#2c70ba" stroke-width="1.600" fill="none"/><path d="M396 400H437" stroke="#2c70ba" stroke-width="1.600" fill="none"/><path d="M396 482H437" stroke="#2c70ba" stroke-width="1.600" fill="none"/><path d="M396 564.5H437" stroke="#2c70ba" stroke-width="1.600" fill="none"/><rect x="403" y="272" width="4.500" height="8" fill="#2c70ba"/><rect x="403" y="354" width="4.500" height="8" fill="#2c70ba"/><rect x="403" y="436.5" width="4.500" height="8" fill="#2c70ba"/><rect x="403" y="519" width="4.500" height="8" fill="#2c70ba"/><rect x="394" y="394" width="4" height="11" fill="#2c70ba"/><path d="M433 591H768M433 601H768" stroke="#2c70ba" stroke-width="1.300" fill="none"/><path d="M436 565V604" stroke="#2c70ba" stroke-width="1.600" fill="none"/><path d="M518.5 565V604" stroke="#2c70ba" stroke-width="1.600" fill="none"/><path d="M600.5 565V604" stroke="#2c70ba" stroke-width="1.600" fill="none"/><path d="M682.5 565V604" stroke="#2c70ba" stroke-width="1.600" fill="none"/><path d="M765 565V604" stroke="#2c70ba" stroke-width="1.600" fill="none"/><rect x="472" y="586.500" width="10" height="4" fill="#2c70ba"/><rect x="554" y="586.500" width="10" height="4" fill="#2c70ba"/><rect x="636.5" y="586.500" width="10" height="4" fill="#2c70ba"/><rect x="718.5" y="586.500" width="10" height="4" fill="#2c70ba"/><rect x="594" y="596.500" width="12" height="4" fill="#2c70ba"/></svg>
<div class="t" style="left:376.0px;top:232.8px;font-size:6px;color:#e03034;">А</div>
<div class="t" style="left:376.0px;top:314.8px;font-size:6px;color:#e03034;">Б</div>
<div class="t" style="left:376.0px;top:397.3px;font-size:6px;color:#e03034;">В</div>
<div class="t" style="left:376.0px;top:479.3px;font-size:6px;color:#e03034;">Г</div>
<div class="t" style="left:376.0px;top:561.8px;font-size:6px;color:#e03034;">Д</div>
<div class="t" style="left:434.3px;top:618.8px;font-size:6px;color:#e03034;">1</div>
<div class="t" style="left:516.8px;top:618.8px;font-size:6px;color:#e03034;">2</div>
<div class="t" style="left:598.8px;top:618.8px;font-size:6px;color:#e03034;">3</div>
<div class="t" style="left:680.8px;top:618.8px;font-size:6px;color:#e03034;">4</div>
<div class="t" style="left:763.3px;top:618.8px;font-size:6px;color:#e03034;">5</div>
<svg style="left:295px;top:595px" width="140" height="130" viewBox="0 0 140 130"><rect x="8.500" y="107.500" width="17" height="17" fill="none" stroke="#e6e6e6" stroke-width="1.500"/><path d="M17 107V31" stroke="#e6e6e6" stroke-width="1.500"/><path d="M17 29l-6.500 22h13z" fill="none" stroke="#e6e6e6" stroke-width="1.500"/><path d="M26 116H83" stroke="#e6e6e6" stroke-width="1.500"/><path d="M105 116l-22-6.500v13z" fill="none" stroke="#e6e6e6" stroke-width="1.500"/><path d="M12 6l5 6 5-6M17 12v6" stroke="#e6e6e6" stroke-width="1.400" fill="none"/><path d="M117 111l10 10M127 111l-10 10" stroke="#e6e6e6" stroke-width="1.400" fill="none"/></svg>
<svg style="left:1355px;top:145px" width="140" height="150" viewBox="0 0 140 150"><circle cx="68.500" cy="68" r="63.500" fill="none" stroke="#5e5e60" stroke-width="1.200"/><circle cx="68.500" cy="68" r="42" fill="none" stroke="#5e5e60" stroke-width="1.200"/><path d="M68.500 4v128M5 68h128" stroke="#5e5e60" stroke-width="1.200"/><circle cx="68.500" cy="68" r="4" fill="#a07c58"/></svg>
<div class="a" style="left:1401px;top:277px;width:42px;height:11px;background:#444446;border-radius:6px;"></div>
<div class="t" style="left:1409.0px;top:279.0px;font-size:8px;color:#767678;letter-spacing:0.042px;">Сверху</div>
<div class="a" id="modeltabs" style="left:274px;top:749px;width:1225px;height:18px;"></div>
<svg style="left:275px;top:752px" width="14" height="13" viewBox="0 0 14 13"><path d="M1 1.500h11.500M1 5h11.500M1 8.500h11.500M1 11.500h11.500" stroke="#9ab8e0" stroke-width="1.200"/><rect x="0.500" y="0.500" width="12.500" height="11.500" fill="none" stroke="#c8c8c8" stroke-width=".800"/></svg>
<div class="a" style="left:302.5px;top:749.5px;width:44.5px;height:15.0px;background:#747375;"></div>
<div class="t" style="left:308.0px;top:753.8px;font-size:8.5px;color:#f6f6f6;font-weight:bold;letter-spacing:0.015px;">Модель</div>
<div class="mtab" style="left:349px;width:18px"></div>
<div class="t" style="left:354.0px;top:754.0px;font-size:8px;color:#9a9a9c;letter-spacing:-0.143px;">A4</div>
<div class="mtab" style="left:369px;width:19px"></div>
<div class="t" style="left:374.0px;top:754.0px;font-size:8px;color:#9a9a9c;letter-spacing:-0.143px;">A3</div>
<div class="mtab" style="left:390px;width:19px"></div>
<div class="t" style="left:395.0px;top:754.0px;font-size:8px;color:#9a9a9c;letter-spacing:-0.143px;">A2</div>
<div class="mtab" style="left:411px;width:19px"></div>
<div class="t" style="left:416.0px;top:754.0px;font-size:8px;color:#d0d0d0;letter-spacing:-0.143px;">A1</div>
<div class="a" id="canvasL" style="left:272.5px;top:122px;width:1.5px;height:645px;"></div>
<div class="a" style="left:272.5px;top:766px;width:1228.0px;height:1.5px;background:#7c7b7d;"></div>
<div class="a" id="rightedge" style="left:1499px;top:24px;width:2px;height:821px;"></div>
<div class="a" id="cmdgap" style="left:-8px;top:767.5px;width:1519px;height:3.0px;"></div>
<div class="a" id="cmd" style="left:-8px;top:770.5px;width:1507px;height:56.5px;"></div>
<div class="a" id="cmdside" style="left:-8px;top:770.5px;width:20px;height:56.5px;"></div>
<div class="a" id="cmdline" style="left:12px;top:812px;width:1487px;height:1px;"></div>
<svg style="left:2px;top:773px" width="8" height="8" viewBox="0 0 8 8"><path d="M1 1l5.500 5.500M6.500 1L1 6.500" stroke="#f6f6f6" stroke-width="1.400"/></svg>
<svg style="left:2px;top:786px" width="8" height="9" viewBox="0 0 8 9"><path d="M2 1v4.500h4.500V1M.5 5.500h7.500M4.200 5.500v3" stroke="#f2f2f2" stroke-width="1.100" fill="none"/></svg>
<div class="t" style="left:1.500px;top:825px;font-size:9.500px;color:#e8e8e8;transform:rotate(-90deg);transform-origin:0 0;">Кома...</div>
<div class="t" style="left:14.5px;top:779.9px;font-size:9.2px;color:#e6e6e6;font-family:'Liberation Mono',monospace;letter-spacing:-0.146px;">*Отмена*</div>
<div class="t" style="left:14.5px;top:790.9px;font-size:9.2px;color:#e6e6e6;font-family:'Liberation Mono',monospace;letter-spacing:-0.092px;">Команда: DEdit</div>
<div class="t" style="left:14.5px;top:801.9px;font-size:9.2px;color:#e6e6e6;font-family:'Liberation Mono',monospace;letter-spacing:-0.066px;">dedit - редактирование</div>
<div class="t" style="left:14.0px;top:814.9px;font-size:9.2px;color:#e6e6e6;font-family:'Liberation Mono',monospace;letter-spacing:-0.146px;">Команда:</div>
<div class="a" id="status" style="left:-8px;top:826.5px;width:1519px;height:18.0px;"></div>
<div class="t" style="left:0.5px;top:830.7px;font-size:8.6px;color:#e0e0e0;letter-spacing:-0.070px;">53526.0248,36363.7039,0.0000</div>
<div class="sb" style="left:199px;width:63px"></div>
<div class="sb" style="left:261px;width:76px"></div>
<div class="sb" style="left:336px;width:67px"></div>
<div class="sb" style="left:402px;width:64px"></div>
<div class="sb" style="left:505px;width:57px"></div>
<div class="sb" style="left:598px;width:30px"></div>
<div class="sb" style="left:627px;width:65px"></div>
<div class="t" style="left:136.0px;top:831.3px;font-size:8.4px;color:#cfcfcf;letter-spacing:0.050px;">ШАГ</div>
<div class="t" style="left:168.0px;top:831.3px;font-size:8.4px;color:#cfcfcf;letter-spacing:-0.459px;">СЕТКА</div>
<div class="t" style="left:207.0px;top:831.3px;font-size:8.4px;color:#e2e2e2;letter-spacing:-0.257px;">оПРИВЯЗКА</div>
<div class="t" style="left:269.0px;top:831.3px;font-size:8.4px;color:#e2e2e2;letter-spacing:-0.115px;">3D оПРИВЯЗКА</div>
<div class="t" style="left:344.0px;top:831.3px;font-size:8.4px;color:#e2e2e2;letter-spacing:-0.257px;">ОТС-ОБЪЕКТ</div>
<div class="t" style="left:410.0px;top:831.3px;font-size:8.4px;color:#e2e2e2;letter-spacing:-0.021px;">ОТС-ПОЛЯР</div>
<div class="t" style="left:474.0px;top:831.3px;font-size:8.4px;color:#e2e2e2;letter-spacing:-0.012px;">ОРТО</div>
<div class="t" style="left:511.0px;top:831.3px;font-size:8.4px;color:#e2e2e2;letter-spacing:0.181px;">ДИН-ВВОД</div>
<div class="t" style="left:570.0px;top:831.3px;font-size:8.4px;color:#cfcfcf;letter-spacing:0.150px;">ИЗО</div>
<div class="t" style="left:606.0px;top:831.3px;font-size:8.4px;color:#e2e2e2;letter-spacing:-0.757px;">ВЕС</div>
<div class="t" style="left:634.0px;top:831.3px;font-size:8.4px;color:#e2e2e2;letter-spacing:-0.158px;">ШТРИХОВКА</div>
<div class="t" style="left:1010.0px;top:831.8px;font-size:8.4px;color:#e0e0e0;letter-spacing:0.223px;">МОДЕЛЬ</div>
<div class="t" style="left:1276.0px;top:831.8px;font-size:8.4px;color:#e0e0e0;letter-spacing:0.330px;">m1:100</div>
<svg style="left:1050px;top:830px" width="12" height="12" viewBox="0 0 12 12"><path d="M1 10l5-5M4 4h3v3" stroke="#c8c8c8" fill="none"/><path d="M1 11h5" stroke="#c8c8c8"/></svg>
<svg style="left:1066px;top:830px" width="12" height="12" viewBox="0 0 12 12"><rect x="1" y="1" width="9" height="8" fill="#e8e8e8"/><rect x="6" y="6" width="5" height="5" fill="#8a8a8c" stroke="#e8e8e8" stroke-width=".800"/></svg>
<svg style="left:1153px;top:829px" width="14" height="14" viewBox="0 0 14 14"><circle cx="4.500" cy="4" r="3" fill="#f0e8c8"/><rect x="3" y="7" width="3" height="2.500" fill="#b8b8b8"/><path d="M8 3l0 8 2-1.800 1.300 2.900 1.300-.600-1.300-2.800 2.600-.200z" fill="#f4f4f4"/></svg>
<svg style="left:1172px;top:829px" width="12" height="14" viewBox="0 0 12 14"><circle cx="5.500" cy="5" r="4" fill="#f4f4f4"/><rect x="3.500" y="9" width="4" height="3.500" fill="#c8c8c8"/></svg>
<div class="a" style="left:1187px;top:828px;width:45px;height:16px;background:#4f6886;border:1px solid #6a8cb8"></div>
<div class="a" style="left:1209px;top:828px;width:1px;height:16px;background:#6a8cb8;"></div>
<svg style="left:1193px;top:831px" width="12" height="12" viewBox="0 0 12 12"><path d="M4 2l5 7" stroke="#e04848" stroke-width="1.400"/><path d="M3 1l1 3 1.500-1z" fill="#f4f4f4"/></svg>
<svg style="left:1214px;top:830px" width="14" height="14" viewBox="0 0 14 14"><path d="M2 1l0 8 2-1.800 1.300 2.900 1.300-.600-1.300-2.800 2.600-.200z" fill="#f4f4f4"/><rect x="7.500" y="6.500" width="6" height="5.500" fill="#9ab8e0" stroke="#e8e8e8" stroke-width=".800"/></svg>
<svg style="left:1239px;top:829px" width="14" height="14" viewBox="0 0 14 14"><path d="M2 1v11h10M2 12" stroke="#d8d8d8" fill="none" stroke-width="1.200"/><path d="M7.500 2v6M5.500 6l2 2.500 2-2.500" stroke="#d8d8d8" fill="none"/></svg>
<svg style="left:1331px;top:829px" width="14" height="14" viewBox="0 0 14 14"><path d="M3 12c-2-3-2.500-5-1.500-5.500l1.500 1V3c0-1 1.500-1 1.500 0V1.800c0-1 1.500-1 1.500 0V3c0-1 1.500-1 1.500 0v1c0-1 1.500-1 1.500 0v5c0 1.500-.5 2.500-1 3z" fill="#f6f6f6"/></svg>
<svg style="left:1355px;top:830px" width="14" height="13" viewBox="0 0 14 13"><circle cx="5.500" cy="5.500" r="4" fill="#dfe8f6" stroke="#f4f4f4"/><circle cx="5.500" cy="5.500" r="1.800" fill="#6c9ee0"/><path d="M8.500 8.500l3.500 3.500" stroke="#d0d0d0" stroke-width="1.500"/></svg>
<div class="a" style="left:1377px;top:829px;width:14px;height:14px;background:#5b9be8;border:1px solid #9cc4f4"></div>
<svg style="left:1379px;top:831px" width="10" height="10" viewBox="0 0 10 10"><circle cx="4.500" cy="4.500" r="3" fill="#5b9be8" stroke="#e8f0fc" stroke-width="1.200"/><path d="M7 7l2.500 2.500" stroke="#e8f0fc" stroke-width="1.300"/></svg>
<svg style="left:1400px;top:829px" width="14" height="14" viewBox="0 0 14 14"><rect x="1" y="1" width="9" height="10" fill="none" stroke="#c8c8c8"/><path d="M1 3h9" stroke="#6c9ee0" stroke-width="1.500"/><circle cx="8.500" cy="9" r="2.500" fill="#48484a" stroke="#d8d8d8"/><path d="M10.500 11l2 2" stroke="#d8d8d8"/></svg>
<svg style="left:1423px;top:829px" width="16" height="14" viewBox="0 0 16 14"><path d="M7.500 0v13" stroke="#a8a8aa"/><path d="M7.500 3L2 6.500 7.500 10M7.500 3l5.500 3.500L7.500 10" stroke="#b8b8ba" fill="none"/></svg>
<svg style="left:1447px;top:830px" width="12" height="12" viewBox="0 0 12 12"><circle cx="5.500" cy="5.500" r="4" fill="none" stroke="#c8d860" stroke-width="1.800"/></svg>
<svg style="left:1461px;top:829px" width="14" height="14" viewBox="0 0 14 14"><rect x="1" y="1" width="8" height="6" fill="none" stroke="#d8d8d8"/><rect x="5" y="5" width="8" height="6" fill="#48484a" stroke="#d8d8d8"/><rect x="7" y="8" width="5" height="3" fill="#f0f0f0"/></svg>
<svg style="left:1481px;top:829px" width="14" height="14" viewBox="0 0 14 14"><rect x="3" y="3" width="8" height="8" fill="#4a9ae8"/><path d="M0.500 3.500V.5h3M10.500 .5h3v3M13.500 10.500v3h-3M3.500 13.500h-3v-3" stroke="#8ac0f0" fill="none" stroke-width="1.200"/></svg>
<div class="a" id="whiteline" style="left:-8px;top:844.5px;width:1519px;height:2.0px;"></div>
<div class="a" id="bottomdark" style="left:-8px;top:846.5px;width:1519px;height:10.5px;"></div>
<div class="a" id="dlgshadow" style="left:780px;top:222px;width:400px;height:410px;"></div>
<div class="a" id="dlg" style="left:783px;top:225px;width:394px;height:403px">
<svg style="left:7px;top:5px" width="12" height="12" viewBox="0 0 12 12"><path d="M2.500 .5h7a2 2 0 0 1 2 2v5a4 4 0 0 1-4 4h-5a2 2 0 0 1-2-2v-7a2 2 0 0 1 2-2z" fill="#3fb8b0"/><path d="M3 3h6.500v4a2.500 2.500 0 0 1-2.500 2.500H3z" fill="#e8f6f6"/><path d="M4 7.500c2 0 3.500-1 4.500-3" stroke="#3fb8b0" fill="none"/></svg>
<div class="t" style="left:22.0px;top:6.1px;font-size:9.8px;color:#1a1a1a;letter-spacing:-0.291px;">Массив осей</div>
<svg style="left:377px;top:6px" width="10" height="10" viewBox="0 0 10 10"><path d="M1 1l7.500 7.500M8.500 1L1 8.500" stroke="#333" stroke-width="1.100"/></svg>
<div class="a" style="left:7px;top:27px;width:51px;height:19px;background:#f9f9f9;border-radius:3px 3px 0 0;"></div>
<div class="t" style="left:10.0px;top:32.1px;font-size:8.8px;color:#2a2a2a;letter-spacing:-0.138px;">Буквенные</div>
<div class="t" style="left:63.0px;top:33.1px;font-size:8.8px;color:#1a1a1a;letter-spacing:-0.294px;">Цифровые</div>
<div class="a" style="left:6px;top:45px;width:185px;height:127px;background:#f9f9f9;"></div>
<div class="a" style="left:9.5px;top:48.5px;width:176.5px;height:116px;background:#a3a2a4;"></div>
<div class="a" style="left:10px;top:49px;width:143.5px;height:15.5px;background:#f4f4f4;"></div>
<div class="a" style="left:10px;top:64.5px;width:143.5px;height:16.5px;background:#eeeeee;"></div>
<div class="a" style="left:10px;top:81px;width:12.5px;height:30.5px;background:#f0f0f0;"></div>
<div class="a" style="left:22.5px;top:81px;width:48.5px;height:30.5px;background:#f0f0f0;"></div>
<div class="a" style="left:71px;top:81px;width:82.5px;height:30.5px;background:#ffffff;"></div>
<div class="a" style="left:9.5px;top:49px;width:1px;height:62.5px;background:#a9a9ab;"></div>
<div class="a" style="left:22.0px;top:49px;width:1px;height:62.5px;background:#a9a9ab;"></div>
<div class="a" style="left:70.5px;top:49px;width:1px;height:62.5px;background:#a9a9ab;"></div>
<div class="a" style="left:104.5px;top:49px;width:1px;height:62.5px;background:#a9a9ab;"></div>
<div class="a" style="left:153.0px;top:49px;width:1px;height:62.5px;background:#a9a9ab;"></div>
<div class="a" style="left:10px;top:48.5px;width:143.5px;height:1px;background:#a9a9ab;"></div>
<div class="a" style="left:10px;top:64.0px;width:143.5px;height:1px;background:#a9a9ab;"></div>
<div class="a" style="left:10px;top:80.5px;width:143.5px;height:1px;background:#a9a9ab;"></div>
<div class="a" style="left:10px;top:96.0px;width:143.5px;height:1px;background:#a9a9ab;"></div>
<div class="a" style="left:10px;top:111.0px;width:143.5px;height:1px;background:#a9a9ab;"></div>
<div class="t" style="left:26.0px;top:52.1px;font-size:8.8px;color:#3a3ad0;font-weight:bold;letter-spacing:0.343px;">Имя</div>
<div class="t" style="left:75.0px;top:52.1px;font-size:8.8px;color:#3a3ad0;font-weight:bold;letter-spacing:0.199px;">Шаг</div>
<div class="t" style="left:109.0px;top:52.1px;font-size:8.8px;color:#3a3ad0;font-weight:bold;letter-spacing:0.109px;">Кол.</div>
<div class="t" style="left:26.0px;top:68.6px;font-size:8.8px;color:#8a8a8a;">Д</div>
<div class="t" style="left:75.0px;top:67.5px;font-size:8px;color:#9a9a9a;">0</div>
<div class="t" style="left:110.0px;top:68.6px;font-size:8.8px;color:#7a7a7a;">1</div>
<svg style="left:13px;top:83.5px" width="7" height="7" viewBox="0 0 7 7"><rect x="0.500" y="0.500" width="6" height="6" fill="#e0e0e0" stroke="#8a8a8a"/><path d="M2 2l3 3M5 2L2 5" stroke="#444" stroke-width=".800"/></svg>
<div class="t" style="left:26.0px;top:83.6px;font-size:8.8px;color:#7a7a7a;">Г</div>
<div class="t" style="left:75.0px;top:83.0px;font-size:9px;color:#333;letter-spacing:0.495px;">6000</div>
<div class="t" style="left:110.0px;top:84.0px;font-size:9px;color:#303030;">4</div>
<div class="t" style="left:10.0px;top:174.6px;font-size:8.8px;color:#303030;letter-spacing:0.247px;">Всего:</div>
<div class="t" style="left:42.0px;top:174.6px;font-size:8.8px;color:#303030;letter-spacing:-0.094px;">24000</div>
<svg style="left:156px;top:174px" width="12" height="11" viewBox="0 0 12 11"><path d="M1.500 2v5M4 2v5" stroke="#444" stroke-width="1.200"/><path d="M7 3l3 3M10 3L7 6" stroke="#c03030" stroke-width="1.100"/><path d="M1 9.500h10" stroke="#c03030" stroke-width="1.200"/></svg>
<svg style="left:174px;top:173px" width="14" height="13" viewBox="0 0 14 13"><circle cx="4" cy="4" r="2.800" fill="none" stroke="#555"/><path d="M6 6l3 3" stroke="#555"/><circle cx="9.500" cy="9" r="2.800" fill="#9cc4f4" stroke="#4a7ec8"/></svg>
<div class="grp" style="left:16px;top:192.5px;width:171.5px;height:122px;"></div>
<div class="t" style="left:21.5px;top:193.6px;font-size:8.8px;color:#303030;letter-spacing:-0.062px;">Маркировка осей</div>
<div class="t" style="left:21.5px;top:207.6px;font-size:8.8px;color:#303030;letter-spacing:-0.174px;">Расположение:</div>
<div class="cmb" style="left:106px;top:205.5px;width:75px;height:14px;"></div>
<div class="t" style="left:109.0px;top:208.1px;font-size:8.8px;color:#303030;letter-spacing:-0.074px;">Влево</div>
<svg style="left:169px;top:210px" width="8" height="6" viewBox="0 0 8 6"><path d="M1 1l3 3 3-3" stroke="#555" fill="none" stroke-width="1"/></svg>
<div class="cb on" style="left:22px;top:223px;width:10px;height:10px;"></div>
<svg style="left:22px;top:223px" width="10" height="10" viewBox="0 0 10 10"><path d="M2.200 5l2 2.200 3.600-4.200" stroke="#fff" stroke-width="1.300" fill="none"/></svg>
<div class="t" style="left:34.0px;top:224.1px;font-size:8.8px;color:#303030;letter-spacing:-0.215px;">Автонумерация</div>
<div class="t" style="left:30.0px;top:241.1px;font-size:8.8px;color:#303030;letter-spacing:-0.147px;">Литерация:</div>
<div class="cmb" style="left:106px;top:238.5px;width:75px;height:14px;"></div>
<div class="t" style="left:109.0px;top:241.1px;font-size:8.8px;color:#303030;letter-spacing:0.211px;">АБВГДЕЖИК</div>
<svg style="left:169px;top:243px" width="8" height="6" viewBox="0 0 8 6"><path d="M1 1l3 3 3-3" stroke="#555" fill="none" stroke-width="1"/></svg>
<div class="cb" style="left:31px;top:256.5px;width:10px;height:10px;"></div>
<div class="t" style="left:43.0px;top:257.1px;font-size:8.8px;color:#303030;letter-spacing:-0.104px;">По возрастанию</div>
<div class="cb dis" style="left:31px;top:270.5px;width:10px;height:10px;"></div>
<div class="t" style="left:43.0px;top:271.1px;font-size:8.8px;color:#b0b0b0;letter-spacing:-0.297px;">Объединение</div>
<div class="t" style="left:30.0px;top:287.1px;font-size:8.8px;color:#303030;letter-spacing:-0.139px;">Начать с:</div>
<div class="inp" style="left:106px;top:283px;width:75px;height:15.5px;"></div>
<div class="t" style="left:107.0px;top:284.1px;font-size:8.8px;color:#444;">А</div>
<div class="cb" style="left:31px;top:301px;width:10px;height:10px;"></div>
<div class="t" style="left:43.0px;top:302.1px;font-size:8.8px;color:#303030;letter-spacing:-0.006px;">Добавить индекс «с»</div>
<div class="grp" style="left:16px;top:318.5px;width:171.5px;height:56px;"></div>
<div class="t" style="left:21.5px;top:319.6px;font-size:8.8px;color:#303030;letter-spacing:-0.026px;">Осевые размеры</div>
<div class="cb on" style="left:22px;top:332.5px;width:10px;height:10px;"></div>
<svg style="left:22px;top:332.5px" width="10" height="10" viewBox="0 0 10 10"><path d="M2.200 5l2 2.200 3.600-4.200" stroke="#fff" stroke-width="1.300" fill="none"/></svg>
<div class="t" style="left:34.0px;top:333.1px;font-size:8.8px;color:#303030;letter-spacing:-0.100px;">Размерная цепь</div>
<div class="cb" style="left:22px;top:345.5px;width:10px;height:10px;"></div>
<div class="t" style="left:34.0px;top:346.1px;font-size:8.8px;color:#303030;letter-spacing:-0.046px;">Группировать размеры</div>
<div class="cb on" style="left:22px;top:359px;width:10px;height:10px;"></div>
<svg style="left:22px;top:359px" width="10" height="10" viewBox="0 0 10 10"><path d="M2.200 5l2 2.200 3.600-4.200" stroke="#fff" stroke-width="1.300" fill="none"/></svg>
<div class="t" style="left:34.0px;top:359.6px;font-size:8.8px;color:#303030;letter-spacing:-0.164px;">Общий размер</div>
<svg style="left:5px;top:385px" width="13" height="12" viewBox="0 0 13 12"><rect x="0.500" y="0.500" width="12" height="11" fill="#d04038" stroke="#7a3028"/><rect x="2" y="2" width="5" height="4" fill="#f0c8c0"/><path d="M2 10l9-8" stroke="#4a6ab0" stroke-width="1.400"/></svg>
<div class="a" style="left:22px;top:384px;width:1px;height:14px;background:#c8c8c8;"></div>
<svg style="left:29px;top:384px" width="12" height="13" viewBox="0 0 12 13"><rect x="0.500" y="0.500" width="11" height="12" fill="#f4f4f4" stroke="#555"/><rect x="2.500" y="0.500" width="6" height="4" fill="#4a6ab0"/><rect x="6.500" y="0.500" width="2" height="3" fill="#d04038"/><rect x="2.500" y="7" width="7" height="5" fill="#d8d8e8" stroke="#777" stroke-width=".600"/></svg>
<svg style="left:47px;top:385px" width="12" height="12" viewBox="0 0 12 12"><circle cx="6" cy="6" r="5.300" fill="#9cc8f0" stroke="#5a9ad8"/></svg>
<div class="t" style="left:50.8px;top:386.8px;font-size:8.5px;color:#2a5aa0;font-weight:bold;">?</div>
<div class="t" style="left:206.0px;top:29.6px;font-size:8.8px;color:#303030;letter-spacing:-0.082px;">Схема массива</div>
<div class="a" style="left:206px;top:41.5px;width:178.5px;height:171px;background:#fdfdfd;border:1px solid #e4e4e4;border-top:1px solid #b8b8b8;"></div>
<svg style="left:-783px;top:-225px" width="1503" height="849" viewBox="0 0 1503 849"><path d="M1027.5 300V419" stroke="#8a8a8a" stroke-width=".800"/><circle cx="1027.5" cy="425.700" r="7.200" fill="#fff" stroke="#8a8a8a" stroke-width=".900"/><path d="M1077.5 300V419" stroke="#8a8a8a" stroke-width=".800"/><circle cx="1077.5" cy="425.700" r="7.200" fill="#fff" stroke="#8a8a8a" stroke-width=".900"/><path d="M1127.5 300V419" stroke="#8a8a8a" stroke-width=".800"/><circle cx="1127.5" cy="425.700" r="7.200" fill="#fff" stroke="#8a8a8a" stroke-width=".900"/><path d="M1027.500 406H1127.500M1027.500 411.500H1127.500" stroke="#8a8a8a" stroke-width=".800"/><path d="M1007 304.5H1131" stroke="#3c3cb4" stroke-width="1"/><circle cx="999.500" cy="304.5" r="7.200" fill="#fff" stroke="#3c3cb4" stroke-width=".900"/><path d="M1007 351H1131" stroke="#3c3cb4" stroke-width="1"/><circle cx="999.500" cy="351" r="7.200" fill="#fff" stroke="#3c3cb4" stroke-width=".900"/><path d="M1007 398.5H1131" stroke="#3c3cb4" stroke-width="1"/><circle cx="999.500" cy="398.5" r="7.200" fill="#fff" stroke="#3c3cb4" stroke-width=".900"/><path d="M1014 304.500V398.500M1020.500 304.500V398.500" stroke="#3c3cb4" stroke-width="1"/><rect x="1025.0" y="302.0" width="5" height="5" fill="#fff" stroke="#3c3cb4" stroke-width=".900"/><rect x="1125.0" y="302.0" width="5" height="5" fill="#fff" stroke="#3c3cb4" stroke-width=".900"/><rect x="1125.0" y="396.0" width="5" height="5" fill="#fff" stroke="#3c3cb4" stroke-width=".900"/><rect x="1024.500" y="395.500" width="6" height="6" fill="#e01028"/></svg>
<div class="grp" style="left:202px;top:222.5px;width:186px;height:69px;"></div>
<div class="t" style="left:206.0px;top:224.1px;font-size:8.8px;color:#303030;letter-spacing:0.108px;">Точка вставки</div>
<div class="cb" style="left:206.5px;top:236.5px;width:10px;height:10px;"></div>
<div class="t" style="left:218.5px;top:237.6px;font-size:8.8px;color:#303030;letter-spacing:0.123px;">Указать точку</div>
<svg style="left:369px;top:236px" width="12" height="13" viewBox="0 0 12 13"><rect x="0.500" y="0.500" width="8" height="7" fill="#fff" stroke="#444"/><path d="M6 4l0 7 1.800-1.600 1.100 2.500 1.100-.500-1.100-2.400 2.300-.200z" fill="#333"/></svg>
<div class="t" style="left:293.0px;top:253.6px;font-size:8.8px;color:#303030;">X:</div>
<div class="inp" style="left:307.5px;top:251.5px;width:75.5px;height:15px;"></div>
<div class="t" style="left:308.0px;top:252.6px;font-size:8.8px;color:#333;letter-spacing:-0.149px;">29534.8750</div>
<div class="t" style="left:293.0px;top:273.6px;font-size:8.8px;color:#303030;">Y:</div>
<div class="inp" style="left:307.5px;top:272px;width:75.5px;height:15px;"></div>
<div class="t" style="left:308.0px;top:273.1px;font-size:8.8px;color:#333;letter-spacing:-0.149px;">26082.3467</div>
<div class="grp" style="left:202px;top:296px;width:186px;height:48.5px;"></div>
<div class="t" style="left:206.0px;top:297.6px;font-size:8.8px;color:#303030;letter-spacing:-0.045px;">Поворот</div>
<div class="cb" style="left:206.5px;top:312px;width:10px;height:10px;"></div>
<div class="t" style="left:218.5px;top:313.1px;font-size:8.8px;color:#303030;letter-spacing:0.160px;">Указать угол</div>
<svg style="left:369px;top:311px" width="12" height="13" viewBox="0 0 12 13"><rect x="0.500" y="0.500" width="8" height="7" fill="#fff" stroke="#444"/><path d="M6 4l0 7 1.800-1.600 1.100 2.500 1.100-.500-1.100-2.400 2.300-.200z" fill="#333"/></svg>
<div class="t" style="left:206.5px;top:330.6px;font-size:8.8px;color:#303030;letter-spacing:-0.035px;">Угол поворота:</div>
<div class="inp" style="left:307.5px;top:327px;width:75.5px;height:15px;"></div>
<div class="t" style="left:308.0px;top:329.1px;font-size:8.8px;color:#333;">0</div>
<div class="grp" style="left:202px;top:352px;width:186px;height:22.5px;"></div>
<div class="cb" style="left:206.5px;top:359px;width:10px;height:10px;"></div>
<div class="t" style="left:218.5px;top:360.1px;font-size:8.8px;color:#303030;letter-spacing:0.024px;">Разбить массив</div>
<div class="a" style="left:307px;top:382.5px;width:40px;height:16.5px;background:#fbfbfb;border:1px solid #6aa2d2;border-radius:3px;"></div>
<div class="t" style="left:320.0px;top:386.6px;font-size:8.8px;color:#111;letter-spacing:0.143px;">OK</div>
<div class="a" style="left:352px;top:382.5px;width:37.5px;height:16.5px;background:#fbfbfb;border:1px solid #e2e2e2;border-radius:3px;"></div>
<div class="t" style="left:355.0px;top:386.6px;font-size:8.8px;color:#111;letter-spacing:-0.096px;">Отмена</div>
</div>
</div>
</body>
</html>
